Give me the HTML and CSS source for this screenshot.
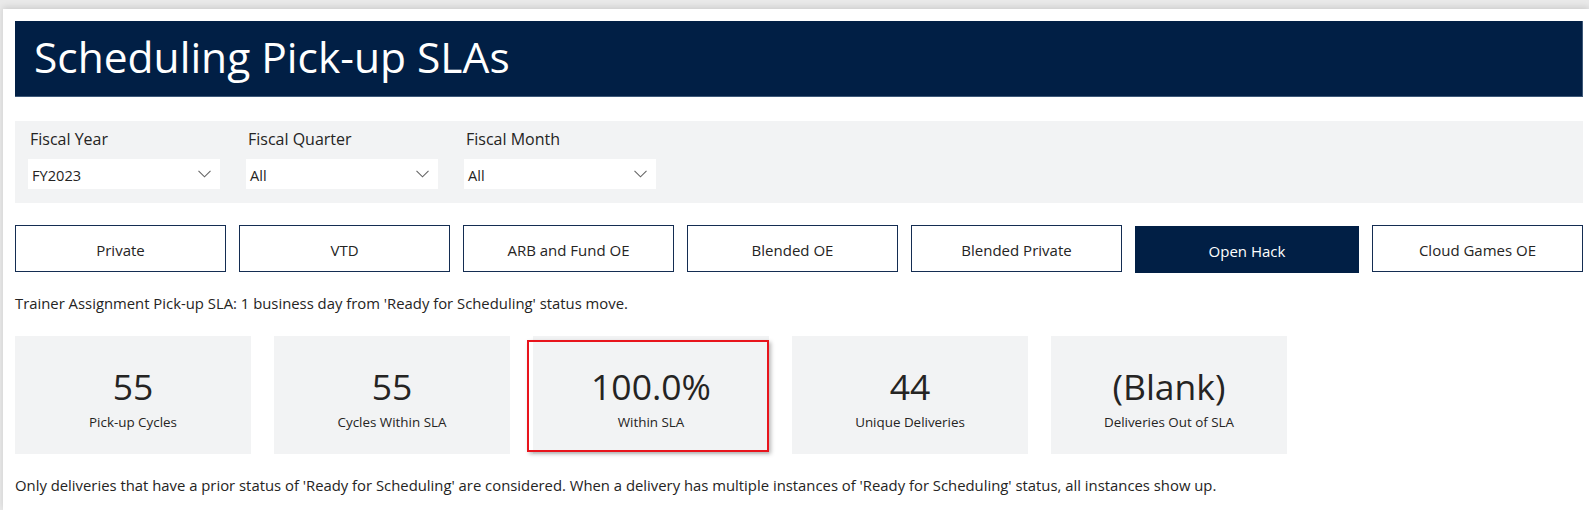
FILE: index.html
```html
<!DOCTYPE html>
<html lang="en">
<head>
<meta charset="utf-8">
<title>Scheduling Pick-up SLAs</title>
<link rel="stylesheet" href="styles.css">
</head>
<body>
<div class="page">
  <header class="title-bar"><h1 class="title">Scheduling Pick-up SLAs</h1></header>

  <section class="filters">
    <div class="slicer">
      <div class="slicer-label">Fiscal Year</div>
      <div class="dropdown"><span>FY2023</span><svg class="chev" width="13" height="8" viewBox="0 0 13 8"><path d="M0.5 0.8 L6.5 6.8 L12.5 0.8" fill="none" stroke="#666" stroke-width="1.1"/></svg></div>
    </div>
    <div class="slicer">
      <div class="slicer-label">Fiscal Quarter</div>
      <div class="dropdown"><span>All</span><svg class="chev" width="13" height="8" viewBox="0 0 13 8"><path d="M0.5 0.8 L6.5 6.8 L12.5 0.8" fill="none" stroke="#666" stroke-width="1.1"/></svg></div>
    </div>
    <div class="slicer">
      <div class="slicer-label">Fiscal Month</div>
      <div class="dropdown"><span>All</span><svg class="chev" width="13" height="8" viewBox="0 0 13 8"><path d="M0.5 0.8 L6.5 6.8 L12.5 0.8" fill="none" stroke="#666" stroke-width="1.1"/></svg></div>
    </div>
  </section>

  <nav class="tabs">
    <div class="tab">Private</div>
    <div class="tab">VTD</div>
    <div class="tab">ARB and Fund OE</div>
    <div class="tab">Blended OE</div>
    <div class="tab">Blended Private</div>
    <div class="tab tab-active">Open Hack</div>
    <div class="tab">Cloud Games OE</div>
  </nav>

  <p class="note note-top">Trainer Assignment Pick-up SLA: 1 business day from 'Ready for Scheduling' status move.</p>

  <section class="cards">
    <div class="card"><div class="value">55</div><div class="label">Pick-up Cycles</div></div>
    <div class="card"><div class="value">55</div><div class="label">Cycles Within SLA</div></div>
    <div class="card card-selected"><div class="value">100.0%</div><div class="label">Within SLA</div><div class="focus"></div></div>
    <div class="card"><div class="value">44</div><div class="label">Unique Deliveries</div></div>
    <div class="card"><div class="value">(Blank)</div><div class="label">Deliveries Out of SLA</div></div>
  </section>

  <p class="note note-bottom">Only deliveries that have a prior status of 'Ready for Scheduling' are considered. When a delivery has multiple instances of 'Ready for Scheduling' status, all instances show up.</p>
</div>
</body>
</html>
```
FILE: styles.css
```css
* { box-sizing: border-box; }
html, body { margin: 0; padding: 0; }
body {
  background: #e9e9e9;
  font-family: "Open Sans", "Noto Sans", sans-serif;
  color: #252423;
  width: 1589px;
  height: 510px;
  overflow: hidden;
}
.page {
  margin: 9px 0 0 3px;
  height: 501px;
  background: #ffffff;
  padding: 12px 6px 0 12px;
  box-shadow: 0 -2px 6px rgba(0,0,0,0.12);
}
.title-bar {
  height: 76px;
  background: #011f45;
  border-right: 1px solid #3d5878;
  border-bottom: 1px solid #3d5878;
  display: flex;
  align-items: center;
  padding-left: 19px;
}
.title {
  margin: 0;
  font-weight: 400;
  font-size: 42.5px;
  color: #ffffff;
  line-height: 1;
  padding-bottom: 3px;
}
.filters {
  margin-top: 24px;
  height: 82px;
  background: #f2f3f4;
  display: flex;
  gap: 26px;
  padding: 8px 13px 0 13px;
}
.slicer { width: 192px; display: flex; flex-direction: column; }
.slicer-label {
  font-size: 16px;
  line-height: 21px;
  padding-left: 2px;
  height: 22px;
}
.dropdown {
  margin-top: 8px;
  height: 30px;
  background: #ffffff;
  display: flex;
  align-items: center;
  justify-content: space-between;
  padding: 2px 9px 0 4px;
  font-size: 14.6px;
}
.chev { display: block; margin-top: -2px; }
.tabs {
  margin-top: 22px;
  display: flex;
  align-items: flex-start;
  gap: 13px;
}
.tab {
  flex: 0 0 211px;
  height: 47px;
  border: 1px solid #142d52;
  display: flex;
  align-items: center;
  justify-content: center;
  font-size: 15px;
  padding-top: 3px;
  color: #252423;
}
.tab-active {
  flex-basis: 224px;
  background: #011f45;
  border-color: #011f45;
  color: #ffffff;
  margin-top: 1px;
}
.note {
  margin: 0;
  font-size: 14.85px;
  line-height: 20px;
}
.note-top { margin-top: 20px; }
.cards {
  margin-top: 23px;
  display: flex;
  gap: 23px;
}
.card {
  position: relative;
  width: 236px;
  height: 118px;
  background: #f2f3f4;
  display: flex;
  flex-direction: column;
  align-items: center;
  padding-top: 29px;
}
.value {
  font-size: 35.5px;
  line-height: 42px;
  color: #252423;
}
.label {
  margin-top: 7px;
  font-size: 13.4px;
  line-height: 17px;
  color: #252423;
}
.focus {
  position: absolute;
  left: -6px;
  top: 4px;
  right: 0;
  bottom: 2px;
  border: 2px solid #e8141c;
  box-shadow: 2px 2px 4px rgba(0,0,0,0.28);
}
.note-bottom { margin-top: 21px; }
```
